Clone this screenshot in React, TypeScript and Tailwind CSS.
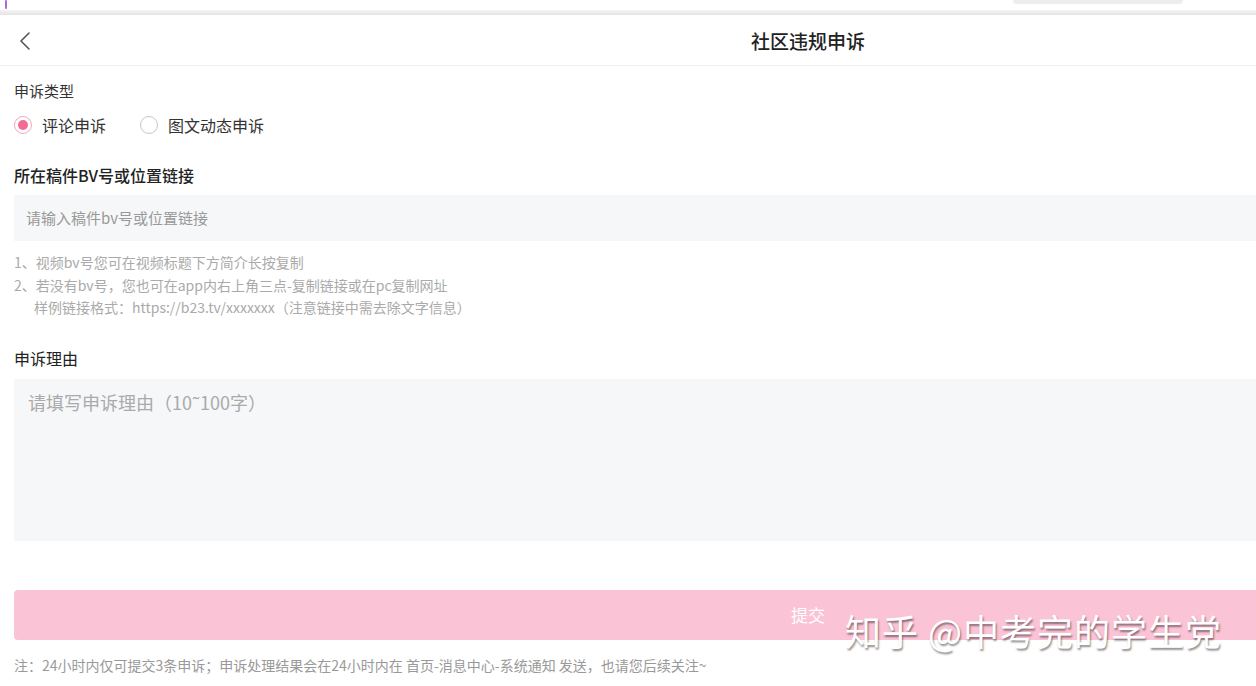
import React from "react";

const font = "font-['Noto_Sans_CJK_SC','Noto_Sans',sans-serif]";

export default function App() {
  const [type, setType] = React.useState("comment");
  const types = [
    { key: "comment", label: "评论申诉" },
    { key: "dynamic", label: "图文动态申诉" },
  ];

  return (
    <div className={`relative w-[1256px] h-[686px] overflow-hidden bg-white ${font}`}>
      <div className="w-[1616px]">
        {/* Browser strip */}
        <div className="relative h-[10px] bg-white">
          <div className="absolute left-[5px] top-0 h-[9px] w-[2px] rounded-full bg-[#a66be0]" />
          <div className="absolute left-[1013px] top-0 h-[4px] w-[170px] rounded-b bg-[#ededed]" />
        </div>
        <div className="h-[5px] bg-gradient-to-b from-[#f4f4f4] to-[#e4e4e4]" />

        {/* Header */}
        <header className="relative flex h-[51px] items-center justify-center border-b border-[#f0f0f0]">
          <svg
            className="absolute left-[17px] top-[16px]"
            width="16"
            height="20"
            viewBox="0 0 16 20"
            fill="none"
            stroke="#555"
            strokeWidth="1.6"
            strokeLinecap="round"
            strokeLinejoin="round"
          >
            <path d="M12 2 L4 10 L12 18" />
          </svg>
          <h1 className="text-[19px] font-medium leading-none text-[#222]">社区违规申诉</h1>
        </header>

        <main className="px-[14px]">
          {/* Type */}
          <h2 className="mt-[15px] text-[15px] leading-[20px] text-[#333]">申诉类型</h2>
          <div className="mt-[14px] flex items-center gap-[34px]">
            {types.map((t) => {
              const on = type === t.key;
              return (
                <button
                  key={t.key}
                  onClick={() => setType(t.key)}
                  className="flex items-center gap-[10px]"
                >
                  <span
                    className={`flex h-[18px] w-[18px] items-center justify-center rounded-full border ${
                      on ? "border-[#f6a5c0]" : "border-[#c8c8c8]"
                    }`}
                  >
                    {on && <span className="h-[10px] w-[10px] rounded-full bg-[#f56a95]" />}
                  </span>
                  <span className="text-[16px] leading-[20px] text-[#333]">{t.label}</span>
                </button>
              );
            })}
          </div>

          {/* BV link */}
          <h2 className="mt-[30px] text-[16px] font-medium leading-[20px] text-[#222]">
            所在稿件BV号或位置链接
          </h2>
          <div className="mt-[10px] flex h-[46px] items-center bg-[#f6f7f8] pl-[12px]">
            <span className="text-[15px] text-[#999]">请输入稿件bv号或位置链接</span>
          </div>
          <div className="mt-[10px] text-[14px] leading-[22.5px] text-[#aaa]">
            <p>1、视频bv号您可在视频标题下方简介长按复制</p>
            <p>2、若没有bv号，您也可在app内右上角三点-复制链接或在pc复制网址</p>
            <p className="pl-[20px]">样例链接格式：https://b23.tv/xxxxxxx（注意链接中需去除文字信息）</p>
          </div>

          {/* Reason */}
          <h2 className="mt-[29px] text-[16px] leading-[20px] text-[#222]">申诉理由</h2>
          <div className="mt-[11px] h-[162px] bg-[#f6f7f8] pl-[14px] pt-[11px]">
            <span className="text-[18px] leading-[24px] text-[#aaa]">请填写申诉理由（10˜100字）</span>
          </div>

          {/* Submit */}
          <button className="mt-[49px] flex h-[50px] w-full items-center justify-center rounded bg-[#fbc3d6] text-[17px] text-white">
            提交
          </button>
          <p className="mt-[16px] text-[14px] leading-[18px] text-[#999]">
            注：24小时内仅可提交3条申诉；申诉处理结果会在24小时内在 首页-消息中心-系统通知 发送，也请您后续关注~
          </p>
        </main>
      </div>

      {/* Watermark */}
      <div className="pointer-events-none absolute left-[845px] top-[608px] text-[36px] leading-[44px] tracking-[1px] text-white [text-shadow:1px_2px_2px_rgba(0,0,0,0.45)]">
        知乎 @中考完的学生党
      </div>
    </div>
  );
}
